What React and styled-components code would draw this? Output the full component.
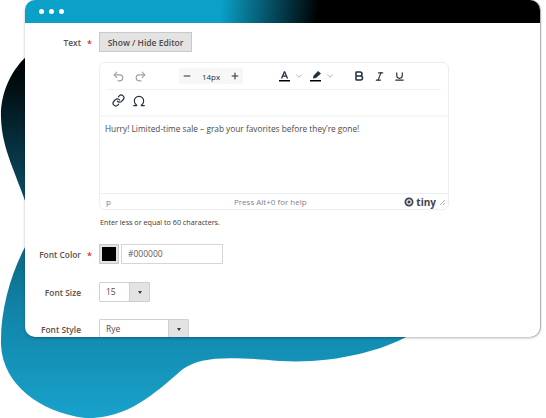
import React from "react";
import styled, { createGlobalStyle } from "styled-components";
import { Undo2, Redo2, Minus, Plus, ChevronDown, Bold, Italic, Underline, Link, Omega } from "lucide-react";

const GlobalStyle = createGlobalStyle`
  html, body {
    margin: 0;
    padding: 0;
    background: #fff;
    overflow: hidden;
  }
  body {
    font-family: "Open Sans", "Liberation Sans", sans-serif;
    color: #41362f;
  }
`;

const Page = styled.div`
  position: relative;
  width: 546px;
  height: 418px;
  padding-left: 25px;
  box-sizing: border-box;
  background: #fff;
`;

const Blob = styled.svg`
  position: absolute;
  left: 0;
  top: 0;
`;

const Card = styled.div`
  position: relative;
  width: 515px;
  height: 337px;
  background: #fff;
  border-radius: 10px;
  overflow: hidden;
  box-shadow: 0 1px 3px rgba(0, 0, 0, 0.28), 1px 0 1px rgba(0, 0, 0, 0.25);
`;

const TitleBar = styled.div`
  height: 23px;
  display: flex;
  align-items: center;
  gap: 5px;
  padding-left: 14px;
  background: linear-gradient(97deg, #0aa0c8 0%, #0aa0c8 38%, #000 57%, #000 100%);
`;

const Dot = styled.span`
  width: 5px;
  height: 5px;
  border-radius: 50%;
  background: #fff;
`;

const Form = styled.div`
  padding-top: 9px;
`;

const Row = styled.div`
  display: grid;
  grid-template-columns: 74px 1fr;
  align-items: ${(p) => (p.$top ? "start" : "center")};
  margin-bottom: ${(p) => p.$gap || 0}px;
`;

const Label = styled.div`
  display: flex;
  justify-content: flex-end;
  padding-right: 18px;
  position: relative;
  font-size: 8.4px;
  font-weight: 600;
  color: #5a4f49;
  white-space: nowrap;
`;

const Star = styled.span`
  position: absolute;
  right: 7px;
  top: 0;
  color: #e22626;
  font-size: 9px;
`;

const ButtonCell = styled.div`
  display: flex;
`;

const GreyButton = styled.button`
  width: 93px;
  height: 20px;
  padding: 0;
  background: #e3e3e3;
  border: 1px solid #c9c9c9;
  font-family: inherit;
  font-size: 8.5px;
  font-weight: 600;
  color: #514943;
`;

const Editor = styled.div`
  width: 350px;
  height: 148px;
  box-sizing: border-box;
  border: 1px solid #eeeeee;
  border-radius: 6px;
  display: flex;
  flex-direction: column;
`;

const ToolRow = styled.div`
  height: ${(p) => (p.$line ? 26 : 21)}px;
  padding-bottom: ${(p) => (p.$line ? 0 : 4)}px;
  flex: none;
  margin: 0 7px;
  display: flex;
  align-items: center;
  color: #222f3e;
  border-bottom: ${(p) => (p.$line ? "1px solid #f0f0f0" : "none")};
`;

const ToolIcon = styled.span`
  display: inline-flex;
  width: ${(p) => p.$w || 22}px;
  margin-left: ${(p) => p.$left || 0}px;
  justify-content: center;
  color: ${(p) => (p.$muted ? "#9aa1a9" : "#222f3e")};
`;

const SizeBox = styled.div`
  width: 64px;
  height: 16px;
  margin: 0 33px 0 28px;
  display: flex;
  align-items: center;
  justify-content: space-between;
  padding: 0 3px;
  box-sizing: border-box;
  background: #f7f7f7;
  font-size: 8px;
  color: #222f3e;
`;

const Spacer = styled.span`
  width: ${(p) => p.$w}px;
`;

const Body = styled.div`
  flex: 1;
  padding: 8px 5px 0;
  font-size: 8.3px;
  color: #4a4a4a;
  white-space: nowrap;
  box-shadow: inset 0 4px 3px -3px rgba(0, 0, 0, 0.07);
`;

const StatusBar = styled.div`
  height: 15px;
  flex: none;
  padding: 0 2px 0 6px;
  display: grid;
  grid-template-columns: 128px auto 1fr;
  align-items: center;
  border-top: 1px solid #eeeeee;
  font-size: 8px;
  color: #7d848c;
`;

const Brand = styled.div`
  display: flex;
  justify-content: flex-end;
  align-items: center;
  gap: 2px;
  font-size: 10px;
  font-weight: 700;
  color: #3c4450;
`;

const Note = styled.div`
  margin-top: 7px;
  padding-left: 1px;
  font-size: 7.2px;
  line-height: 10px;
  color: #41362f;
`;

const ColorField = styled.div`
  display: flex;
  gap: 2px;
`;

const Swatch = styled.div`
  width: 20px;
  height: 20px;
  box-sizing: border-box;
  border: 1px solid #c9c9c9;
  padding: 2px;
  background: #e3e3e3;
  &::after {
    content: "";
    display: block;
    height: 100%;
    background: #000;
  }
`;

const HexInput = styled.div`
  width: 102px;
  height: 20px;
  box-sizing: border-box;
  border: 1px solid #d6d6d6;
  padding-left: 6px;
  font-size: 8.5px;
  line-height: 18px;
  color: #5a5a5a;
`;

const Select = styled.div`
  width: ${(p) => p.$w}px;
  height: 20px;
  box-sizing: border-box;
  border: 1px solid #cfcfcf;
  border-radius: 1px;
  display: flex;
  justify-content: space-between;
  padding-left: 6px;
  font-size: 8.5px;
  line-height: 18px;
  color: #514943;
`;

const Arrow = styled.span`
  width: 19px;
  background: #e3e3e3;
  border-left: 1px solid #cfcfcf;
  display: flex;
  align-items: center;
  justify-content: center;
  &::after {
    content: "";
    border-left: 2.5px solid transparent;
    border-right: 2.5px solid transparent;
    border-top: 3px solid #41362f;
  }
`;

export default function App() {
  return (
    <Page>
      <GlobalStyle />
      <Blob width="546" height="418" viewBox="0 0 546 418">
        <defs>
          <linearGradient id="blobFill" x1="0" y1="57" x2="0" y2="418" gradientUnits="userSpaceOnUse">
            <stop offset="0" stopColor="#000" />
            <stop offset="0.12" stopColor="#03161d" />
            <stop offset="0.4" stopColor="#0a5068" />
            <stop offset="0.7" stopColor="#1184a8" />
            <stop offset="1" stopColor="#18a2cb" />
          </linearGradient>
        </defs>
        <path
          d="M30 53 C10 70 0 95 1 118 C2 150 16 172 30 215 L30 238 C14 265 0 305 1 345 C3 385 40 412 85 418 C130 420 160 388 183 369 C200 357 225 356 280 361 C330 364 380 352 410 335 L410 300 L30 300 Z"
          fill="url(#blobFill)"
        />
      </Blob>
      <Card>
        <TitleBar>
          <Dot />
          <Dot />
          <Dot />
        </TitleBar>
        <Form>
          <Row $gap={10}>
            <Label>
              Text<Star>*</Star>
            </Label>
            <ButtonCell>
              <GreyButton>Show / Hide Editor</GreyButton>
            </ButtonCell>
          </Row>
          <Row $top $gap={17}>
            <span />
            <div>
              <Editor>
                <ToolRow $line>
                  <ToolIcon $muted>
                    <Undo2 size={13} />
                  </ToolIcon>
                  <ToolIcon $muted>
                    <Redo2 size={13} />
                  </ToolIcon>
                  <SizeBox>
                    <Minus size={10} strokeWidth={2.5} />
                    14px
                    <Plus size={10} strokeWidth={2.5} />
                  </SizeBox>
                  <ToolIcon $w={16}>
                    <svg width="13" height="13" viewBox="0 0 13 13">
                      <path d="M6.5 1.5 L3.5 8.5 M6.5 1.5 L9.5 8.5 M4.6 6.2 H8.4" stroke="#222f3e" strokeWidth="1.3" fill="none" />
                      <rect x="1" y="10" width="11" height="1.5" fill="#000" />
                    </svg>
                  </ToolIcon>
                  <ToolIcon $w={13} $muted>
                    <ChevronDown size={10} />
                  </ToolIcon>
                  <ToolIcon $w={16} $left={2}>
                    <svg width="13" height="13" viewBox="0 0 13 13">
                      <path d="M9 1 L12 3.5 L7 8 L4 8.5 L4.5 5.8 Z" fill="#222f3e" />
                      <rect x="1" y="10" width="11" height="1.5" fill="#000" />
                    </svg>
                  </ToolIcon>
                  <ToolIcon $w={13} $muted>
                    <ChevronDown size={10} />
                  </ToolIcon>
                  <Spacer $w={13} />
                  <ToolIcon $w={20}>
                    <Bold size={12} strokeWidth={3} />
                  </ToolIcon>
                  <ToolIcon $w={20}>
                    <Italic size={11} strokeWidth={2.5} />
                  </ToolIcon>
                  <ToolIcon $w={20}>
                    <Underline size={11} strokeWidth={2.5} />
                  </ToolIcon>
                </ToolRow>
                <ToolRow>
                  <ToolIcon>
                    <Link size={13} strokeWidth={2.2} />
                  </ToolIcon>
                  <ToolIcon $w={20}>
                    <Omega size={14} strokeWidth={2} />
                  </ToolIcon>
                </ToolRow>
                <Body>Hurry! Limited-time sale – grab your favorites before they’re gone!</Body>
                <StatusBar>
                  <span>p</span>
                  <span>Press Alt+0 for help</span>
                  <Brand>
                    <svg width="10" height="10" viewBox="0 0 10 10">
                      <circle cx="5" cy="5" r="3.6" fill="none" stroke="#3c4450" strokeWidth="1.8" />
                      <rect x="3.6" y="3.6" width="2.8" height="2.8" fill="#3c4450" />
                    </svg>
                    tiny
                    <svg width="8" height="10" viewBox="0 0 8 10">
                      <path d="M7 3 L2 8 M7 6 L5 8" stroke="#9a9a9a" strokeWidth="0.8" />
                    </svg>
                  </Brand>
                </StatusBar>
              </Editor>
              <Note>Enter less or equal to 60 characters.</Note>
            </div>
          </Row>
          <Row $gap={18}>
            <Label>
              Font Color<Star>*</Star>
            </Label>
            <ColorField>
              <Swatch />
              <HexInput>#000000</HexInput>
            </ColorField>
          </Row>
          <Row $gap={17}>
            <Label>Font Size</Label>
            <Select $w={51}>
              15
              <Arrow />
            </Select>
          </Row>
          <Row>
            <Label>Font Style</Label>
            <Select $w={90}>
              Rye
              <Arrow />
            </Select>
          </Row>
        </Form>
      </Card>
    </Page>
  );
}
